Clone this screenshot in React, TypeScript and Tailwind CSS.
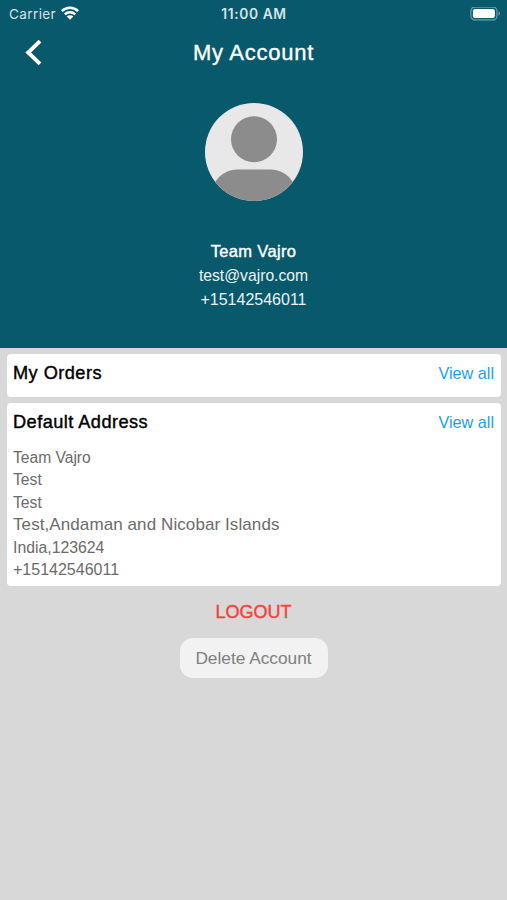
const address = [
    { text: 'Team Vajro', className: 'text-[15.6px]' },
    { text: 'Test', className: 'text-[15.7px]' },
    { text: 'Test', className: 'text-[15.7px]' },
    { text: 'Test,Andaman and Nicobar Islands', className: 'text-[17px] tracking-[0.09px]' },
    { text: 'India,123624', className: 'text-[15.8px]' },
    { text: '+15142546011', className: 'text-[16px]' },
];

function StatusBar() {
    return (
        <div className="grid h-7 grid-cols-3 items-center pl-[9px] pr-[6px] font-['Inter',sans-serif] text-[13.5px] text-[#d5e3e8]">
            <div className="flex items-center gap-[5px]">
                <span className="tracking-[0.4px]">Carrier</span>
                <svg className="-mt-[2px]" width="18" height="14" viewBox="0 0 18 14" fill="none" stroke="white" strokeWidth="2.5">
                    <path d="M0.9 5.1a11.6 11.6 0 0 1 16.2 0" />
                    <path d="M3.8 8.4a7.4 7.4 0 0 1 10.4 0" />
                    <path d="M9 13.8L5.7 10.6a4.6 4.6 0 0 1 6.6 0z" fill="white" stroke="none" />
                </svg>
            </div>
            <span className="-ml-[2px] whitespace-nowrap text-center text-[13.8px] font-semibold tracking-[0.6px]">11:00 AM</span>
            <svg className="justify-self-end" width="31" height="14" viewBox="0 0 31 14" fill="none">
                <rect x="0.9" y="0.1" width="26" height="12.8" rx="3.8" stroke="#6d9baa" strokeWidth="1.2" />
                <rect x="2.9" y="2.1" width="22" height="8.8" rx="2" fill="white" />
                <path d="M28.5 4.3v4.4q1.6-.6 1.6-2.2t-1.6-2.2z" fill="#6d9baa" />
            </svg>
        </div>
    );
}

function Avatar() {
    return (
        <svg width="98" height="98" viewBox="0 0 98 98">
            <clipPath id="avatar">
                <circle cx="49" cy="49" r="49" />
            </clipPath>
            <g clipPath="url(#avatar)">
                <rect width="98" height="98" fill="#e8e8e8" />
                <circle cx="49" cy="36.2" r="23" fill="#8c8c8c" />
                <rect x="7" y="66.5" width="84" height="60" rx="25" fill="#8c8c8c" />
            </g>
        </svg>
    );
}

function CardHeader({ title }: { title: string }) {
    return (
        <div className="flex h-[38px] items-center justify-between">
            <h2 className="pt-[2px] text-[18.2px] tracking-[0.45px] text-black [-webkit-text-stroke:0.4px]">{title}</h2>
            <button className="text-[16.2px] text-[#1a9ff0]">View all</button>
        </div>
    );
}

export default function App() {
    return (
        <div className="flex min-h-[900px] w-full flex-col bg-[#d8d8d8] font-['Liberation_Sans',Arial,sans-serif]">
            <header className="flex h-[348px] flex-col bg-[#08596b] text-white">
                <StatusBar />
                <div className="grid h-12 grid-cols-3 items-center">
                    <button aria-label="Back" className="ml-[25px]">
                        <svg width="17" height="27" viewBox="0 0 17 27" fill="none" stroke="white" strokeWidth="3.9">
                            <path d="M15 2.1L3.2 13.5L15 24.9" />
                        </svg>
                    </button>
                    <h1 className="whitespace-nowrap text-center text-[22px] tracking-[0.75px] [-webkit-text-stroke:0.35px]">My Account</h1>
                </div>
                <div className="flex flex-col items-center pt-[27px]">
                    <Avatar />
                    <p className="mt-[38px] text-[16.5px] leading-6 tracking-[0.35px] [-webkit-text-stroke:0.4px]">Team Vajro</p>
                    <p className="mt-px text-[15.7px] leading-6 text-[#eaf3f6]">test@vajro.com</p>
                    <p className="text-[16px] leading-6 text-[#eaf3f6]">+15142546011</p>
                </div>
            </header>

            <main className="flex flex-col pl-[7px] pr-[6px] pt-[6px]">
                <section className="h-[43px] rounded-[4px] bg-white pl-[6px] pr-[7px]">
                    <CardHeader title="My Orders" />
                </section>
                <section className="mt-[6px] h-[183px] rounded-[4px] bg-white pl-[6px] pr-[7px]">
                    <CardHeader title="Default Address" />
                    <div className="pt-[6px] text-[#6b6b6b]">
                        {address.map((line, i) => (
                            <p key={i} className={`h-[22.4px] leading-[22.4px] ${line.className}`}>{line.text}</p>
                        ))}
                    </div>
                </section>
                <button className="mr-px mt-[14px] self-center text-[18px] leading-6 text-[#f5403c] [-webkit-text-stroke:0.4px]">LOGOUT</button>
                <button className="mr-px mt-[14px] h-10 w-[148px] self-center rounded-[13px] bg-[#f2f2f2] pt-[2px] text-[17.3px] text-[#808080]">Delete Account</button>
            </main>
        </div>
    );
}
